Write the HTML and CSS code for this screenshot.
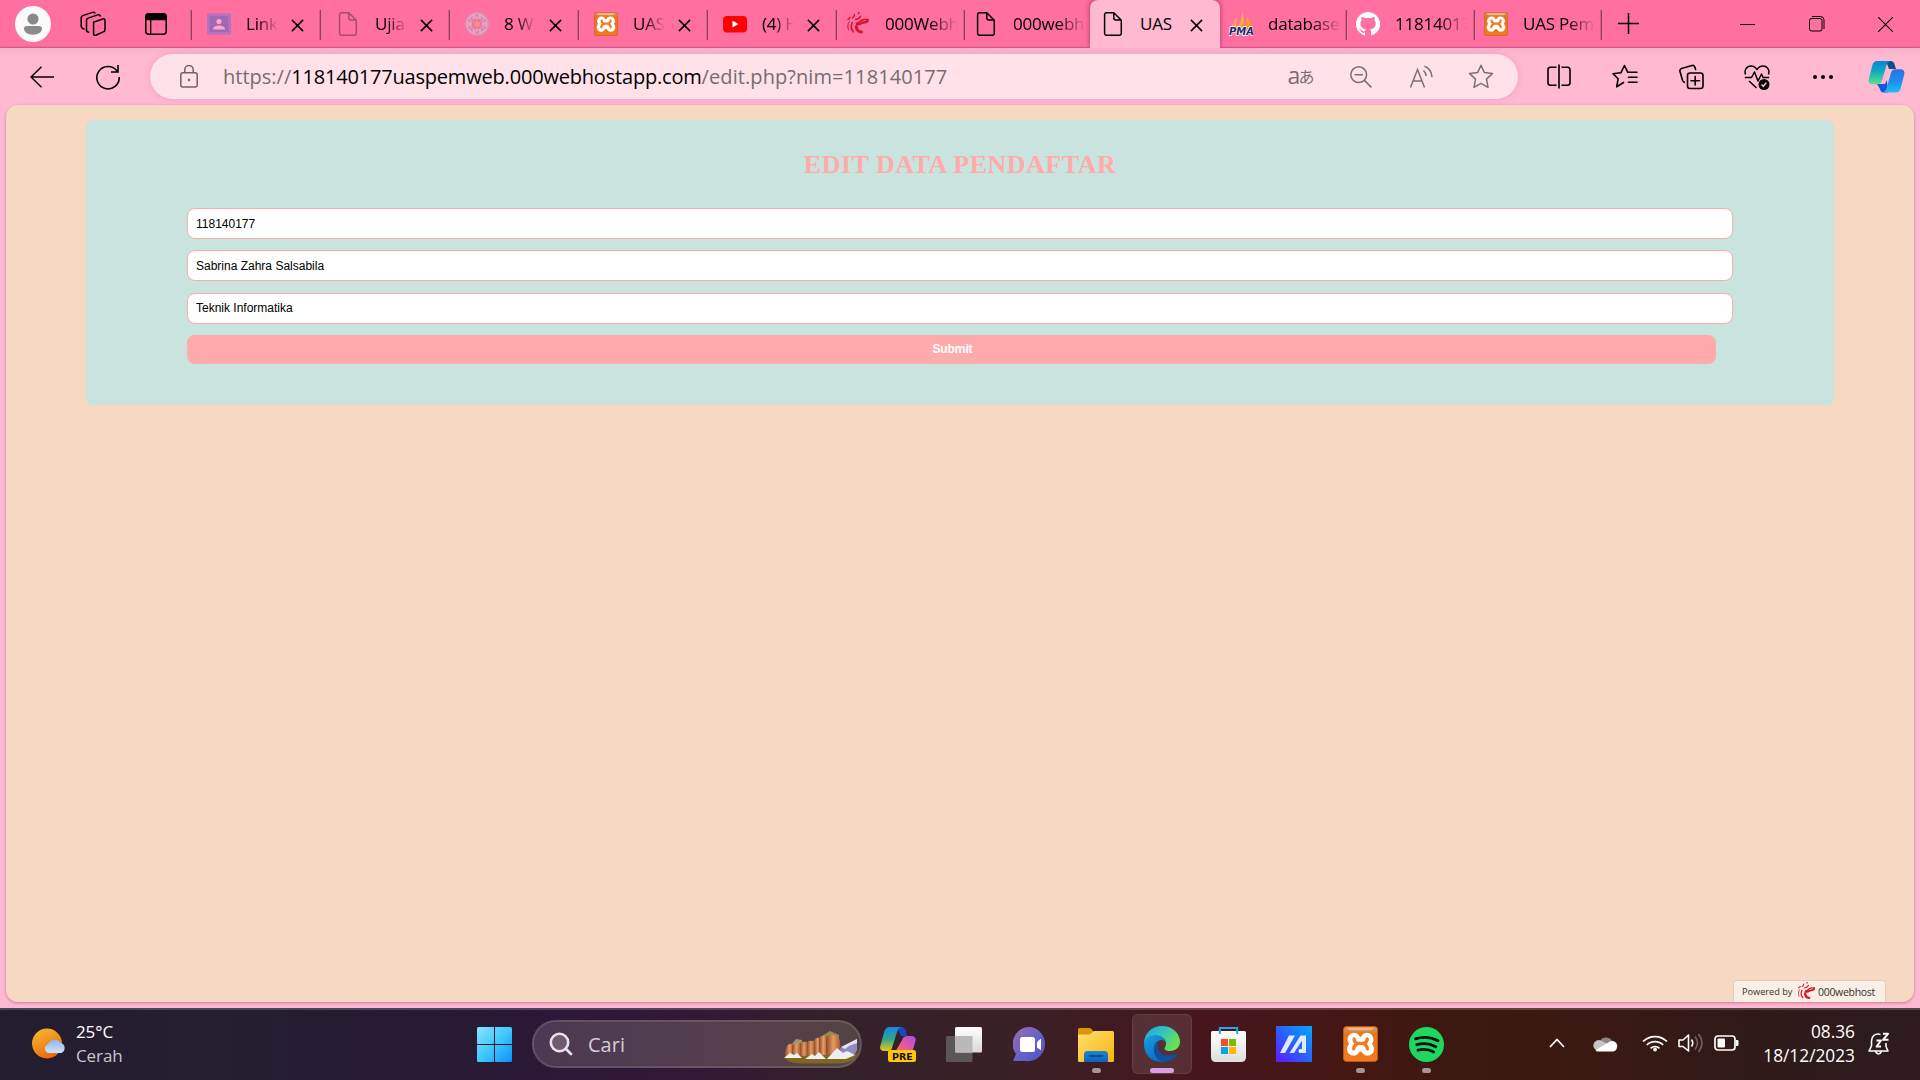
FILE: index.html
```html
<!DOCTYPE html>
<html lang="id">
<head>
<meta charset="utf-8">
<title>UAS Pemweb</title>
<link rel="stylesheet" href="styles.css">
</head>
<body>
<svg class="defs" width="0" height="0" aria-hidden="true">
  <defs>
    <linearGradient id="gXampp" x1="0" y1="0" x2="0" y2="1"><stop offset="0" stop-color="#d99a66"/><stop offset=".22" stop-color="#e8741c"/><stop offset="1" stop-color="#f47a20"/></linearGradient>
    <linearGradient id="gSail" x1="0" y1="0" x2="1" y2="1"><stop offset="0" stop-color="#ffc98a"/><stop offset="1" stop-color="#ff8a00"/></linearGradient>
    <linearGradient id="gCopA" x1="0" y1="0" x2="0" y2="1"><stop offset="0" stop-color="#0a86d8"/><stop offset=".45" stop-color="#12a9c0"/><stop offset="1" stop-color="#5fe08c"/></linearGradient>
    <linearGradient id="gCopB" x1="0" y1="0" x2="0" y2="1"><stop offset="0" stop-color="#2f6fe0"/><stop offset=".6" stop-color="#1b93f5"/><stop offset="1" stop-color="#1fc1f7"/></linearGradient>
    <linearGradient id="gCopC" x1="0" y1="0" x2="0" y2="1"><stop offset="0" stop-color="#1686e0"/><stop offset=".5" stop-color="#2fa58c"/><stop offset="1" stop-color="#f0c516"/></linearGradient>
    <linearGradient id="gCopD" x1="1" y1="0" x2="0" y2="1"><stop offset="0" stop-color="#a54ff0"/><stop offset=".5" stop-color="#e0569f"/><stop offset="1" stop-color="#ff6d5a"/></linearGradient>
    <linearGradient id="gWin" x1="0" y1="0" x2="1" y2="1"><stop offset="0" stop-color="#8ae3ff"/><stop offset=".5" stop-color="#40c8fb"/><stop offset="1" stop-color="#0a91f5"/></linearGradient>
    <linearGradient id="gSun" x1=".2" y1="0" x2=".7" y2="1"><stop offset="0" stop-color="#f3b92e"/><stop offset="1" stop-color="#f0620c"/></linearGradient>
    <linearGradient id="gCloud" x1="0" y1="0" x2="0" y2="1"><stop offset="0" stop-color="#8fb4ee"/><stop offset="1" stop-color="#d3e1fa"/></linearGradient>
    <linearGradient id="gRock" x1="0" y1="0" x2="1" y2="0"><stop offset="0" stop-color="#8a4a2b"/><stop offset=".5" stop-color="#e89a63"/><stop offset="1" stop-color="#9c5028"/></linearGradient>
    <linearGradient id="gChat" x1="0" y1="0" x2="1" y2="1"><stop offset="0" stop-color="#9a6bb0"/><stop offset=".5" stop-color="#6a62c4"/><stop offset="1" stop-color="#4a54c8"/></linearGradient>
    <linearGradient id="gFolder" x1="0" y1="0" x2="1" y2="1"><stop offset="0" stop-color="#ffdf6e"/><stop offset="1" stop-color="#f7b50c"/></linearGradient>
    <linearGradient id="gFolderIn" x1="0" y1="0" x2="0" y2="1"><stop offset="0" stop-color="#1b86d6"/><stop offset="1" stop-color="#0b63b6"/></linearGradient>
    <linearGradient id="gEdgeTop" x1="0" y1="0" x2="1" y2=".5"><stop offset="0" stop-color="#1fa4dc"/><stop offset=".5" stop-color="#30c3c6"/><stop offset="1" stop-color="#6be050"/></linearGradient>
    <linearGradient id="gEdgeLow" x1="0" y1="0" x2=".6" y2="1"><stop offset="0" stop-color="#1b9de2"/><stop offset="1" stop-color="#0a6cc4"/></linearGradient>
    <linearGradient id="gStore" x1="0" y1="0" x2="0" y2="1"><stop offset="0" stop-color="#ffffff"/><stop offset="1" stop-color="#dedede"/></linearGradient>
    <linearGradient id="gAsus" x1="0" y1="1" x2="1" y2="0"><stop offset="0" stop-color="#5a1bff"/><stop offset=".5" stop-color="#2a62fb"/><stop offset="1" stop-color="#05a6ff"/></linearGradient>
    <linearGradient id="gTaskA" x1="0" y1="0" x2="0" y2="1"><stop offset="0" stop-color="#ffffff"/><stop offset="1" stop-color="#d9d9d9"/></linearGradient>

    <symbol id="close" viewBox="0 0 13 13"><path d="M.9.9 12.1 12.1M12.1.9.9 12.1" fill="none" stroke="#000" stroke-width="1.5"/></symbol>
    <symbol id="doc" viewBox="0 0 24 24"><path d="M5.6.7h7.2l7.5 7.5v13a2.1 2.1 0 0 1-2.1 2.1H5.7a2.1 2.1 0 0 1-2.1-2.1V2.8A2.1 2.1 0 0 1 5.700.7zM12.800.9v5.200a2 2 0 0 0 2 2h5.300" fill="none" stroke="currentColor" stroke-width="1.5" stroke-linejoin="round"/></symbol>
    <symbol id="xampp" viewBox="0 0 24 24" preserveAspectRatio="none">
      <rect x=".3" y=".3" width="23.400" height="23.400" rx="2.200" fill="url(#gXampp)" stroke="#bb5a14" stroke-width=".6"/>
      <path d="M2.800 1.200h18.400c-.4 1.200-1.500 1.700-3.200 1.700H6c-1.700 0-2.800-.5-3.200-1.700z" fill="#f6cfae" opacity=".7"/>
      <g fill="#fff"><circle cx="7.600" cy="9" r="4.500"/><circle cx="16.400" cy="9" r="4.500"/><circle cx="7.200" cy="15.300" r="4.500"/><circle cx="16.800" cy="15.300" r="4.500"/><path d="M7.500 7h9v10h-9z"/></g>
      <path d="M12 4v3.200l-1.200-1zM12 4l1.200 2.200L12 7.200zM10.600 18h2.800l1 2.500H9.600z" fill="#ef781d"/>
      <path d="M7.600 8.600c0 1.600.6 2.500 2.200 3h4.600c1.500-.5 2.200-1.400 2.200-3M9.800 12c-1.700.7-2.500 1.800-2.500 3.300M14.400 12c1.600.7 2.300 1.800 2.300 3.300" fill="none" stroke="#f47a20" stroke-width="2.200" stroke-linecap="round"/>
    </symbol>
    <symbol id="swirl" viewBox="0 0 24 24">
      <g fill="none" stroke="#d8142b" stroke-linecap="round">
        <path d="M10.500 11.500c3.500-.5 4-3.400 7-3.900 1.800-.3 3 .2 4.500-.3" stroke-width="1.600"/>
        <path d="M11 12.300c3 .8 4-1.800 6.800-1.800 1.800 0 2.800-.2 4-1.800" stroke-width="2.300"/>
        <path d="M10.300 14.500c.2 3.300 2.200 5.300 5 5.600" stroke-width="3"/>
        <path d="M6.300 10.500c-1.600 3.200-1.200 7 1 9.300" stroke-width="1.600"/>
        <path d="M3.300 9.500C1.500 12 1.300 15.500 2.600 18" stroke-width="1"/>
        <path d="M9.500 7.500c2.300-.3 4.300-1.500 5-3.300M6.500 5.800c1.300-.7 2-1.800 2-3.300M2 7.300c1-.3 1.700-.9 2-1.800M12.500 1.500l.4-1" stroke-width="1.400"/>
      </g>
    </symbol>
  </defs>
</svg>

<div class="browser">
  <header class="tabstrip">
    <div class="cell cell-profile"><svg width="36" height="36" viewBox="0 0 36 36"><circle cx="18" cy="18" r="18" fill="#fbfbfb"/><circle cx="18" cy="13" r="5.600" fill="#8a8a8a"/><path d="M12 20h12c1.800 0 3 1 3 2.600 0 3.800-4 6.200-9 6.200s-9-2.400-9-6.200C9 21 10.200 20 12 20z" fill="#8a8a8a"/></svg></div>
    <div class="cell cell-work"><svg width="26" height="26" viewBox="0 0 26 26" fill="none" stroke="#000" stroke-width="1.500" stroke-linejoin="round" stroke-linecap="round"><path d="M13.500 11.200 22.700 8q2.300-.7 2.300 1.600v8.800q0 1.900-1.800 2.500l-7.400 3.300q-2.200.7-2.200-1.500v-9.600q0-1.300-.1-1.900z"/><path d="M8.700 21.200Q6.500 20.800 6.500 18.700v-9.400q0-1.600 1.600-2.200l9.600-3.200q2-.6 2.600 1.200"/><path d="M4 18Q1.200 17.300 1.200 15V6.800q0-1.600 1.600-2.200L12.500 1.400q1.600-.5 2.400.6"/></svg></div>
    <div class="cell cell-actions"><svg width="22" height="22" viewBox="0 0 22 22"><rect x=".8" y=".8" width="20.400" height="20.400" rx="3" fill="none" stroke="#000" stroke-width="1.500"/><path d="M1 6.500V3.500A2.600 2.600 0 0 1 3.600 1h14.800A2.600 2.600 0 0 1 21 3.500v3zM5.700 6v15" stroke="#000" stroke-width="1.300"/></svg></div>

    <div class="tab">
      <svg class="fav" viewBox="0 0 24 24"><rect y="1.500" width="24" height="21" rx="1" fill="#b274c0"/><rect x="2.500" y="4" width="19" height="16" fill="#a069b4"/><circle cx="12" cy="9.500" r="2.600" fill="#ffa6c8"/><path d="M6 17.500c0-2.800 3-4 6-4s6 1.200 6 4z" fill="#ffa6c8"/></svg>
      <span class="title">Link</span><svg class="x"><use href="#close"/></svg>
    </div>
    <div class="tab">
      <svg class="fav dim"><use href="#doc"/></svg>
      <span class="title">Ujian</span><svg class="x"><use href="#close"/></svg>
    </div>
    <div class="tab">
      <svg class="fav" viewBox="0 0 24 24"><circle cx="12" cy="12" r="11.300" fill="#f7a3bf" stroke="#d693b8" stroke-width="1.400"/><g fill="none" stroke="#b886b4" stroke-width=".8"><circle cx="12" cy="12" r="8.500" stroke-dasharray="1.500 1"/><path d="M12 2 18 19 3 8h18L6 19zM12 22 6 5l15 11H3L18 5z"/></g><circle cx="12" cy="12" r="4.600" fill="#ff6f83"/><path d="m9 10.500 3-1.500 3 1.500v3L12 15l-3-1.500z" fill="#ff8b96"/></svg>
      <span class="title">8 Wa</span><svg class="x"><use href="#close"/></svg>
    </div>
    <div class="tab">
      <svg class="fav"><use href="#xampp"/></svg>
      <span class="title">UAS</span><svg class="x"><use href="#close"/></svg>
    </div>
    <div class="tab">
      <svg class="fav" viewBox="0 0 24 24"><rect y="4" width="24" height="16.500" rx="4" fill="#f00"/><path d="m9.500 8.700 6 3.400-6 3.500z" fill="#fff"/></svg>
      <span class="title">(4) H</span><svg class="x"><use href="#close"/></svg>
    </div>
    <div class="tab compact">
      <svg class="fav"><use href="#swirl"/></svg>
      <span class="title">000Webh</span>
    </div>
    <div class="tab compact narrow">
      <svg class="fav"><use href="#doc"/></svg>
      <span class="title">000webh</span>
    </div>
    <div class="tab active">
      <svg class="fav"><use href="#doc"/></svg>
      <span class="title">UAS</span><svg class="x"><use href="#close"/></svg>
    </div>
    <div class="tab compact after-active">
      <svg class="fav" viewBox="0 0 24 24"><path d="M7.500 3.500v13H1C4 13 6.500 9 7.500 3.500zM13.500-.5C15 6 15.500 11 14 16.500H8c3-4.500 5-10 5.500-17zM17.500 5c2.500 2.500 5.500 7.500 6.500 11.500h-8.500c1.500-3 2-7 2-11.500z" fill="url(#gSail)"/><text x="0" y="23" class="pma">PMA</text></svg>
      <span class="title">database</span>
    </div>
    <div class="tab compact">
      <svg class="fav" viewBox="0 0 16 16"><path fill="#fff" d="M8 0a8 8 0 0 0-2.530 15.590c.4.070.55-.17.55-.38v-1.490c-2.010.37-2.530-.49-2.690-.94-.09-.23-.48-.94-.82-1.130-.28-.15-.68-.52-.01-.53.63-.01 1.080.58 1.230.82.72 1.210 1.870.87 2.330.66.070-.52.28-.87.51-1.070-1.780-.2-3.640-.89-3.640-3.950 0-.87.31-1.590.82-2.150-.08-.2-.36-1.020.08-2.120 0 0 .67-.21 2.200.82a7.600 7.600 0 0 1 4 0c1.530-1.040 2.200-.82 2.200-.82.44 1.100.16 1.920.08 2.120.51.560.82 1.270.82 2.150 0 3.070-1.870 3.750-3.650 3.950.29.250.54.730.54 1.480v2.200c0 .21.150.46.550.38A8 8 0 0 0 8 0z"/></svg>
      <span class="title">1181401<span class="last-char">7</span></span>
    </div>
    <div class="tab compact last">
      <svg class="fav"><use href="#xampp"/></svg>
      <span class="title">UAS Pem</span>
    </div>
    <div class="newtab"><svg width="21" height="21" viewBox="0 0 21 21"><path d="M10.500 0v21M0 10.500h21" stroke="#000" stroke-width="1.500"/></svg></div>
    <div class="window-controls">
      <svg width="15" height="15" viewBox="0 0 15 15"><path d="M0 7.500h15" stroke="#000"/></svg>
      <svg width="16" height="16" viewBox="0 0 16 16" fill="none" stroke="#000"><rect x=".5" y="2.500" width="12.500" height="12.500" rx="2"/><path d="M3 .5h8.500a3.500 3.500 0 0 1 3.500 3.500v9"/></svg>
      <svg width="15" height="15" viewBox="0 0 15 15"><path d="m0 0 15 15M15 0 0 15" stroke="#000" stroke-width="1.100"/></svg>
    </div>
  </header>

  <nav class="toolbar">
    <svg class="back" width="24" height="22" viewBox="0 0 24 22"><path d="M11.500.7 1 11l10.500 10.300M1 11h23" fill="none" stroke="#000" stroke-width="1.500"/></svg>
    <svg class="reload" width="24" height="26" viewBox="0 0 24 26"><path d="M21 7A11.200 11.200 0 1 0 23.200 13M22 1v7h-7" fill="none" stroke="#000" stroke-width="1.600"/></svg>
    <div class="address">
      <svg class="lock" width="18" height="23" viewBox="0 0 18 23" fill="none" stroke="#6e6467" stroke-width="1.500"><rect x=".8" y="7.800" width="16.400" height="14.200" rx="2"/><path d="M4.800 7.800V4.700a4.200 4.200 0 0 1 8.400 0v3.100"/><circle cx="9" cy="15" r="1" fill="#6e6467" stroke-width=".8"/></svg>
      <div class="url"><span class="scheme">https://</span><span class="host">118140177uaspemweb.000webhostapp.com</span><span class="path">/edit.php?nim=118140177</span></div>
      <div class="address-actions">
        <span class="translate"><span>a</span><span class="kana">あ</span></span>
        <svg width="22" height="22" viewBox="0 0 22 22" fill="none" stroke="#7a7073" stroke-width="1.500"><circle cx="8.700" cy="8.700" r="7.900"/><path d="M4.500 8.700h8.400M14.400 14.400l7 7"/></svg>
        <svg width="24" height="24" viewBox="0 0 24 24" fill="none" stroke="#7a7073" stroke-width="1.500"><path d="M1.500 22.500 8.500 4.500l7 18M4 16h9M14.500 5.500c1.600 1.500 2.500 3.300 2.700 5.500M15.500 1.300c4 1.500 7 5.500 7.500 10.900"/></svg>
        <svg width="26" height="25" viewBox="0 0 26 25" fill="none" stroke="#7a7073" stroke-width="1.500" stroke-linejoin="round"><path d="m13 1.300 3.400 7.300 8 1-5.900 5.500 1.500 8.300-7-4-7 4 1.500-8.300L1.600 9.600l8-1z"/></svg>
      </div>
    </div>
    <div class="toolbar-actions">
      <svg width="24" height="25" viewBox="0 0 24 25" fill="none" stroke="#000" stroke-width="1.600"><path d="M9.500 3.300H3.500A2.500 2.500 0 0 0 1 5.800v13a2.500 2.500 0 0 0 2.500 2.500h6M14.500 3.300h6A2.500 2.500 0 0 1 23 5.800v13a2.500 2.500 0 0 1-2.500 2.500h-6M12 .5v24"/></svg>
      <svg width="26" height="25" viewBox="0 0 26 25" fill="none" stroke="#000" stroke-width="1.600" stroke-linejoin="round" stroke-linecap="round"><path d="m11.500 18.500-6.800 4.300 1.400-8L1 9.800l7.800-1L12.500 1.500l3.300 6.800H25M16.500 13.300H25M16.500 18.300H25"/></svg>
      <svg width="25" height="26" viewBox="0 0 25 26" fill="none" stroke="#000" stroke-width="1.600" stroke-linecap="round" stroke-linejoin="round"><rect x="8.500" y="9" width="15.500" height="15.500" rx="2.500"/><path d="M16.200 12.500v8.500M12 16.700h8.500M5.300 18.300Q4 17.800 3.500 16.300L1 7.500Q.5 5.300 2.500 4.500L13 1.500Q15 1 15.800 3l.8 2.500"/></svg>
      <svg width="26" height="26" viewBox="0 0 26 26"><path d="M1.500 10.500C-.2 5 3.500 2 7 2c2.800 0 4.700 1.500 6 3.500C14.300 3.500 16.200 2 19 2c3.500 0 7.200 3 5.500 8.500M.8 13.500h6.700l3-5.500 3.500 9 3.500-7 1.500 3.500h6.200M5 17l7.500 7" fill="none" stroke="#000" stroke-width="1.500" stroke-linejoin="round"/><circle cx="20" cy="20.500" r="5.500"/><path d="m17.500 20.500 1.800 1.800 3-3.500" fill="none" stroke="#ffb9d1" stroke-width="1.500"/></svg>
      <svg width="22" height="6" viewBox="0 0 22 6"><circle cx="3" cy="3" r="2"/><circle cx="11" cy="3" r="2"/><circle cx="19" cy="3" r="2"/></svg>
      <svg class="copilot" width="37" height="33" viewBox="0 0 37 33"><path d="M18 1h4.500c2.300 0 3.500 1.500 4.200 3.700L28 9h-7z" fill="#0b4f8a"/><path d="M9 24h8l2-4 1 12.500h-4.500c-2.300 0-3-1.800-3.700-3.800z" fill="#1b55d8"/><path d="M9.500 1h13c-2.500.5-3.500 2.500-4.300 5l-4 14c-.8 2.800-2 4.200-5 4.200H4.500C1.300 24.200 0 22 .8 18.700L4.300 5.500C5 2.500 6.500 1 9.500 1z" fill="url(#gCopA)"/><path d="M27.500 32.500h-13c2.500-.5 3.500-2.500 4.300-5l4-14c.8-2.800 2-4.200 5-4.200h4.700c3.200 0 4.500 2.200 3.700 5.500L32.700 28c-.7 3-2.200 4.500-5.200 4.500z" fill="url(#gCopB)"/></svg>
    </div>
  </nav>

  <main class="page">
    <form class="card">
      <h1>EDIT DATA PENDAFTAR</h1>
      <div class="fields">
        <input type="text" value="118140177" aria-label="NIM">
        <input type="text" value="Sabrina Zahra Salsabila" aria-label="Nama">
        <input type="text" value="Teknik Informatika" aria-label="Prodi" class="prodi">
        <button type="button">Submit</button>
      </div>
    </form>
    <div class="powered"><span class="by">Powered by</span><svg width="19" height="19"><use href="#swirl"/></svg><span class="brand">000webhost</span></div>
  </main>
</div>

<footer class="taskbar">
  <div class="weather">
    <svg width="34" height="31" viewBox="0 0 34 31"><circle cx="15" cy="15.500" r="15" fill="url(#gSun)"/><path d="M16.500 25a4.500 4.500 0 0 1-.5-8.700 7 7 0 0 1 12.500-1.500A5.300 5.300 0 0 1 29 25z" fill="url(#gCloud)"/></svg>
    <div class="two-line"><span>25°C</span><span class="muted">Cerah</span></div>
  </div>
  <div class="apps">
    <div class="app start"><svg width="35" height="35" viewBox="0 0 35 35" fill="url(#gWin)"><path d="M0 1.500Q0 0 1.500 0H17v17H0zM18 0h15.500Q35 0 35 1.500V17H18zM0 18h17v17H1.500Q0 35 0 33.500zM18 18h17v15.500q0 1.500-1.500 1.500H18z"/></svg></div>
    <div class="search">
      <svg width="24" height="24" viewBox="0 0 24 24" fill="none" stroke="#e8e2e9" stroke-width="2.600" stroke-linecap="round"><circle cx="10.500" cy="10.500" r="8.700" fill="#6f5b70"/><path d="m17 17 5 5"/></svg>
      <span>Cari</span>
      <svg class="scene" width="76" height="34" viewBox="0 0 76 34"><path d="M54 20 66 13l8-4v11l-4 7H56z" fill="#8f8abf"/><path d="m58 17 8-4 8-4v4l-8 3-4 3z" fill="#e6e2f2"/><path d="m39 6 8-5 9 4v4H40z" fill="#9a8a55"/><path d="m9 14 4-5 6 1v6z" fill="#a3966a"/><path d="M2 27c0-9 2-13 5-13q4-1 4 2v12z" fill="url(#gRock)"/><path d="M9 28V16q1-3 5-2 4-2 4 2v12z" fill="url(#gRock)"/><path d="M17 28V15q0-4 4-3 4-1 4 3v13z" fill="url(#gRock)"/><path d="M24 28V13q1-3 4-2 4-1 4 3v14z" fill="url(#gRock)"/><path d="M31 28V10q2-3 7-2v20z" fill="url(#gRock)"/><path d="M36 28V9q1-4 5-3 4-1 4 3v19z" fill="url(#gRock)"/><path d="M43 29V8q2-4 6-3 7 0 8 6l1 18z" fill="url(#gRock)"/><path d="M1 27q30-2 73-3-3 9-18 9.500H19Q4 33 1 27z" fill="#7d681f"/><path d="m1 28 6-5 4 2 3-2 5 5zM22 29l7-5 3 2 4-4 7 7zM44 29l10-11 6 5 4-2 8 4-9 4z" fill="#eeeef4"/></svg>
    </div>
    <div class="app w64"><svg width="36" height="35" viewBox="0 0 36 35"><path d="M17 0h4c3 0 4 1.500 5 4.500L27 9h-6z" fill="#1749c2"/><path d="M10 0h12c-3 .5-4 2-5 5l-5 16c-.7 2-2 3-4 3H4c-3 0-4.500-2-3.700-5L4 5.500C5 2 6.500 0 10 0z" fill="url(#gCopC)"/><path d="M15 25h13c3 0 4.700-1 5.500-4l2-7c.8-3-.8-5-4-5h-4c-3 0-4.500 1-5.300 4z" fill="url(#gCopD)"/><rect x="8" y="23" width="28" height="12" rx="2.500" fill="#ffc60a"/><text x="12" y="32.500" class="pre">PRE</text></svg></div>
    <div class="app"><svg width="36" height="35" viewBox="0 0 36 35"><rect y="9" width="26.500" height="26" rx="1.500" fill="#5b5658"/><rect x="9" width="27" height="25.500" rx="1.500" fill="url(#gTaskA)"/><rect x="9" y="9" width="17.500" height="16.500" fill="#bab8b9"/></svg></div>
    <div class="app"><svg width="35" height="35" viewBox="0 0 35 35"><path d="M17.500 0A17 17 0 1 1 12 34H1q-1 0-.6-1L3 27A17 17 0 0 1 17.500 0z" fill="url(#gChat)"/><rect x="7" y="10" width="15" height="15" rx="2.500" fill="#fff"/><path d="m24 15 3.500-3h.5v11h-.5L24 20.500z" fill="#fff"/></svg></div>
    <div class="app on"><svg width="36" height="35" viewBox="0 0 36 35"><path d="M0 10V2.500Q0 1 1.500 1H11q1.500 0 2.500 1l2 2.500V10z" fill="#d9980a"/><path d="M0 7.500h11q1.300 0 2-.7l2-2q.6-.8 2-.8h17.500Q36 4 36 5.500v28q0 1.500-1.500 1.500h-33Q0 35 0 33.500z" fill="url(#gFolder)"/><path d="M6 35v-7.500Q6 24 9.500 24h17q3.500 0 3.500 3.500V35z" fill="url(#gFolderIn)"/><path d="M11.500 29h13" stroke="#06427f" stroke-width="1.600" stroke-linecap="round"/></svg></div>
    <div class="app on current"><svg width="36" height="36" viewBox="0 0 36 36"><path d="M0 18C0 7 8 0 18 0c11 0 18 8 18 15.500 0 6-4.500 9.500-10 9.500-3.500 0-5.500-1.200-5.500-2.600 0-1.200 1.500-1.800 1.500-4.900C22 13 17 9.500 11.500 9.500 6 9.500 1.500 13 0 18z" fill="url(#gEdgeTop)"/><path d="M0 18c1-5 5.500-8.500 11.500-8.500 5.500 0 9.500 3 10.300 6.500-1-1.300-2.500-2-4.300-2-3.800 0-7.500 4-7.500 9.500 0 6 4 10.500 9.500 12.300C8 37 0 29 0 18z" fill="url(#gEdgeLow)"/><path d="M13.500 19.500c0 6 5 10 10.500 10 4 0 7-1.500 8.800-2 .8-.2 1.200.5.700 1.300C30.500 33 25.500 36 20 36c-6-1.300-10-6-10-12.500 0-4.500 2.500-7.500 5.500-8.900-1.200 1.400-2 3.200-2 4.900z" fill="#104f9e"/></svg></div>
    <div class="app"><svg width="35" height="35" viewBox="0 0 35 35"><path d="M0 5.500Q0 4 1.500 4h32Q35 4 35 5.500V30q0 5-5 5H5q-5 0-5-5z" fill="url(#gStore)"/><path d="M8.800 7V1h17.400v6" fill="none" stroke="#24a7e4" stroke-width="2"/><path d="M10 12h7v7h-7z" fill="#f25022"/><path d="M18 12h7v7h-7z" fill="#7fba00"/><path d="M10 20h7v7h-7z" fill="#00a4ef"/><path d="M18 20h7v7h-7z" fill="#ffb900"/></svg></div>
    <div class="app"><svg width="36" height="36" viewBox="0 0 36 36"><path d="M0 0h36v36H0z" fill="url(#gAsus)"/><path d="M4 27 13 9.500h6L9 27zM13.500 27 24.500 9.500H30V27h-4V14.500L18 27z" fill="#dfe9ff"/><circle cx="24.500" cy="25" r="2" fill="#fff"/></svg></div>
    <div class="app on"><svg width="35" height="36"><use href="#xampp"/></svg></div>
    <div class="app on"><svg width="35" height="35" viewBox="0 0 35 35"><circle cx="17.500" cy="17.500" r="17.500" fill="#1ed760"/><path d="M6.500 11.800c7.500-2.300 16-1.500 22.500 2M7.800 17.700c6.500-1.900 13.500-1.100 19 2M9 23.200c5.500-1.500 11-.9 15.700 1.700" fill="none" stroke="#101010" stroke-width="2.800" stroke-linecap="round"/></svg></div>
  </div>
  <div class="tray">
    <svg class="chev" width="16" height="10" viewBox="0 0 16 10"><path d="m1 9 7-7.500L15 9" fill="none" stroke="#fff" stroke-width="1.700"/></svg>
    <svg class="drive" width="25" height="17" viewBox="0 0 25 17"><path d="M7 6a7 7 0 0 1 12.500 1L12 12z" fill="#8f8483"/><path d="M1 13A5.500 5.500 0 0 1 8 5.500L16 10 4 16z" fill="#c9c3c3"/><path d="M2.500 15 17 6.500a5 5 0 0 1 7 6q-.8 4-4.500 4H5q-2 0-2.500-1.500z" fill="#fff"/></svg>
    <svg class="wifi" width="26" height="18" viewBox="0 0 26 18" fill="none" stroke="#fff" stroke-width="1.700"><path d="M1 7.500a17 17 0 0 1 24 0M4.800 11a11.500 11.500 0 0 1 16.400 0M8.500 14.300a6.500 6.500 0 0 1 9 0"/><circle cx="13" cy="15.500" r="1.500" fill="#fff" stroke-width="1"/></svg>
    <svg class="sound" width="25" height="20" viewBox="0 0 25 20" fill="none" stroke="#fff" stroke-width="1.600"><path d="M1 7v6.500h4l5.500 4.500V2L5 7z" stroke-linejoin="round"/><path d="M13.500 6.500q2.500 3.500 0 7"/><path d="M17 3.500q5 6.500 0 13M20.500 1q7 9 0 18" stroke="#77635f"/></svg>
    <svg class="battery" width="25" height="16" viewBox="0 0 25 16"><rect x="1" y="1" width="20" height="14" rx="3" fill="none" stroke="#fff" stroke-width="1.700"/><rect x="3.500" y="3.500" width="7.500" height="9" rx="1" fill="#fff"/><path d="M22 5h1.200q1.300 0 1.300 1.300v3.400q0 1.300-1.300 1.300H22z" fill="#fff"/></svg>
    <div class="two-line clock"><span>08.36</span><span>18/12/2023</span></div>
    <svg class="bell" width="22" height="23" viewBox="0 0 22 23" fill="none" stroke="#fff" stroke-width="1.600" stroke-linejoin="round"><path d="M12.500 2.500C7 .8 3.500 4.500 3.500 9v5L1 19h19l-2-4.500V11M7.500 19.500q3 5 6 0"/><path d="M8.500 8.500h4.500l-4.500 6H13M15 1.800h5l-5 6h5.500" stroke-width="1.900"/></svg>
  </div>
</footer>
</body>
</html>
```
FILE: styles.css
```css
* { box-sizing: border-box; }

body {
  margin: 0;
  width: 1920px;
  height: 1080px;
  overflow: hidden;
  display: flex;
  flex-direction: column;
  font-family: "Open Sans", "Noto Sans", sans-serif;
  color: #000;
}

svg { display: block; flex: none; }
.defs { position: absolute; }

.browser {
  height: 1008px;
  display: flex;
  flex-direction: column;
  background: #ffb9d1;
}

/* Tab strip */
.tabstrip {
  height: 48px;
  flex: none;
  display: flex;
  background: #ff6f9f;
  box-shadow: inset 0 -1px #d35b88, inset 0 -2px 1px #f0689a;
}
.cell { height: 48px; display: flex; align-items: center; justify-content: center; }
.cell-profile { width: 66px; }
.cell-work { width: 54px; }
.cell-actions { width: 71px; }

.tab {
  width: 129px;
  height: 48px;
  flex: none;
  display: flex;
  align-items: center;
  padding-bottom: 1px;
}
.tab::before {
  content: "";
  width: 1px;
  height: 30px;
  margin: 3px 15px 0 0;
  background: #8d3f62;
  box-shadow: -1px 0 #d55f89;
}
.fav { width: 24px; height: 24px; margin-top: 1px; color: #000; }
.fav.dim { color: #a34e6e; }
.title {
  width: 33px;
  margin: 0 12px 0 15px;
  white-space: nowrap;
  font-size: 17px;
  line-height: 24px;
  letter-spacing: -.2px;
  -webkit-mask-image: linear-gradient(90deg, #000 35%, transparent 97%);
  mask-image: linear-gradient(90deg, #000 35%, transparent 97%);
}
.last-char { opacity: .6; }
.x { width: 13px; height: 13px; margin-top: 3px; }
.compact { width: 128px; }
.compact::before { margin-right: 9px; }
.compact .title { width: 73px; margin: 0 0 0 15px; -webkit-mask-image: linear-gradient(90deg, #000 60%, transparent); mask-image: linear-gradient(90deg, #000 60%, transparent); }
.narrow { width: 126px; }
.after-active { width: 126px; }
.after-active::before { visibility: hidden; margin-right: 8px; }
.active {
  width: 130px;
  background: #ffb9d1;
  border-radius: 8px 8px 0 0;
  box-shadow: 0 -1px 5px rgba(120, 20, 60, .65);
  clip-path: inset(0 -6px 0 -6px);
}
.active::before { visibility: hidden; margin-right: 10px; }
.active .title { width: 38px; -webkit-mask-image: none; mask-image: none; }
.last { width: 127px; }
.last .title { margin-left: 15px; width: 72px; }
.pma { font: italic bold 10px "DejaVu Sans", sans-serif; fill: #1d2b6b; stroke: #fff; stroke-width: 1.400px; paint-order: stroke; }

.newtab { display: flex; align-items: center; padding-bottom: 1px; }
.newtab::before {
  content: "";
  width: 1px;
  height: 30px;
  margin: 3px 16px 0 0;
  background: #8d3f62;
  box-shadow: -1px 0 #d55f89;
}
.window-controls {
  margin-left: auto;
  display: grid;
  grid-template-columns: repeat(3, 69px);
  place-items: center;
}

/* Toolbar */
.toolbar {
  height: 57px;
  flex: none;
  display: flex;
  align-items: center;
  padding: 0 0 0 30px;
  background: linear-gradient(#f7b3cb, #ffb9d1 8px);
}
.reload { margin: 0 30px 0 42px; }
.address {
  width: 1368px;
  height: 45px;
  flex: none;
  display: flex;
  align-items: center;
  padding-left: 30px;
  border-radius: 23px;
  background: #ffe1ea;
  box-shadow: 0 0 6px rgba(210, 100, 150, .3);
}
.url {
  flex: 1;
  margin-left: 25px;
  font-size: 20px;
  line-height: 28px;
  white-space: nowrap;
  color: #776d70;
  display: flex;
}
.host { color: #000; letter-spacing: -.19px; }
.path { letter-spacing: .08px; }
.address-actions {
  width: 240px;
  margin-right: 7px;
  display: grid;
  grid-template-columns: repeat(4, 60px);
  place-items: center;
}
.translate { display: flex; align-items: center; color: #7a7073; font-size: 23px; line-height: 24px; }
.translate > :first-child { margin-top: -3px; }
.kana { font: 16px/24px "Noto Sans CJK JP", sans-serif; margin: -1px 0 0 -2px; }
.toolbar-actions {
  margin-left: 8px;
  display: grid;
  grid-template-columns: repeat(5, 66px) 61px;
  place-items: center;
}

/* Web page */
.page {
  width: 1908px;
  height: 897px;
  margin-left: 6px;
  padding: 15px 80px 0;
  border-radius: 12px;
  background: #f7d8c3;
  box-shadow: 0 1px 3px rgba(170, 50, 110, .5);
  display: flex;
  flex-direction: column;
}
.card {
  height: 285px;
  padding: 30px 101px 0;
  border-radius: 7px;
  background: #c9e3de;
}
.card h1 {
  margin: 0 0 28px;
  text-align: center;
  font: bold 26px/30px "Liberation Serif", serif;
  letter-spacing: .5px;
  color: #ffabab;
}
.fields { display: flex; flex-direction: column; }
.fields input {
  width: 1546px;
  height: 31px;
  margin: 0 0 11px;
  padding: 0 8px;
  border: 1px solid #ffabab;
  border-radius: 8px;
  background: #fff;
  font: 12px "Liberation Sans", sans-serif;
  color: #000;
}
.fields .prodi { margin-top: 1px; padding-bottom: 2px; }
.fields button {
  width: 1529px;
  height: 29px;
  padding: 0 0 2px 2px;
  border: 0;
  border-radius: 8px;
  background: #ffabab;
  font: bold 12px "Liberation Sans", sans-serif;
  letter-spacing: -.1px;
  color: #fff;
}
.powered {
  width: 153px;
  height: 22px;
  margin: auto -52px 0 auto;
  padding-left: 8px;
  display: flex;
  align-items: center;
  border: 1px solid #e3cdbf;
  border-bottom: 0;
  border-radius: 4px 4px 0 0;
  background: #fbeee4;
  color: #333;
  white-space: nowrap;
}
.powered svg { margin: 0 2px 0 5px; }
.by { width: 50px; font-size: 9.200px; }
.brand { font-size: 10.500px; letter-spacing: -.3px; }

/* Taskbar */
.taskbar {
  height: 72px;
  flex: none;
  display: flex;
  color: #fff;
  border-top: 2px solid rgba(255, 255, 255, .18);
  background: linear-gradient(90deg, #231d2f 0, #241e30 220px, #271a33 430px, #2c1838 560px, #341a33 720px, #33212a 830px, #382126 1000px, #46161d 1200px, #451714 1340px, #3b1810 1450px, #3a1912 1600px, #2f1a19 1760px, #2d1b20 1920px) border-box;
}
.two-line { display: flex; flex-direction: column; font-size: 17px; line-height: 24px; }
.muted { color: #c9c6cd; }
.weather { width: 464px; display: flex; padding: 10px 0 0 32px; }
.weather svg { margin: 8px 10px 0 0; }
.weather .two-line { letter-spacing: -.1px; }
.apps { display: flex; align-items: flex-start; padding-top: 4px; }
.app {
  width: 60px;
  height: 60px;
  margin-right: 6px;
  display: grid;
  place-items: center;
  border-radius: 6px;
  position: relative;
}
.app.start { margin-right: 8px; }
.app.w64 { margin-left: 6px; }
.on::after {
  content: "";
  position: absolute;
  left: 26px;
  bottom: 1px;
  width: 9px;
  height: 5px;
  border-radius: 3px;
  background: #a59596;
}
.current { background: rgba(255, 255, 255, .1); border: 1px solid rgba(255, 255, 255, .08); }
.current::after { left: 17px; bottom: 0; width: 24px; background: #dc9ee4; }
.search {
  width: 330px;
  height: 48px;
  margin-top: 6px;
  padding: 0 1px 0 15px;
  display: flex;
  align-items: center;
  border: 2px solid rgba(255, 255, 255, .12);
  border-radius: 24px;
  background: linear-gradient(90deg, #4b3852, #54404d 60%, #554242);
  font-size: 20px;
  color: #d5ced6;
}
.search span { margin-left: 15px; }
.scene { margin-left: auto; margin-top: 5px; }
.pre { font: bold 9.500px "DejaVu Sans", sans-serif; fill: #111; }

.tray { margin-left: auto; display: flex; height: 66px; align-items: center; padding-right: 30px; }
.drive { margin-left: 28px; }
.wifi { margin-left: 24px; }
.sound { margin-left: 10px; }
.battery { margin-left: 11px; }
.clock { width: 104px; margin: 1px 13px 0 12px; align-items: flex-end; font-size: 17.300px; }
```
